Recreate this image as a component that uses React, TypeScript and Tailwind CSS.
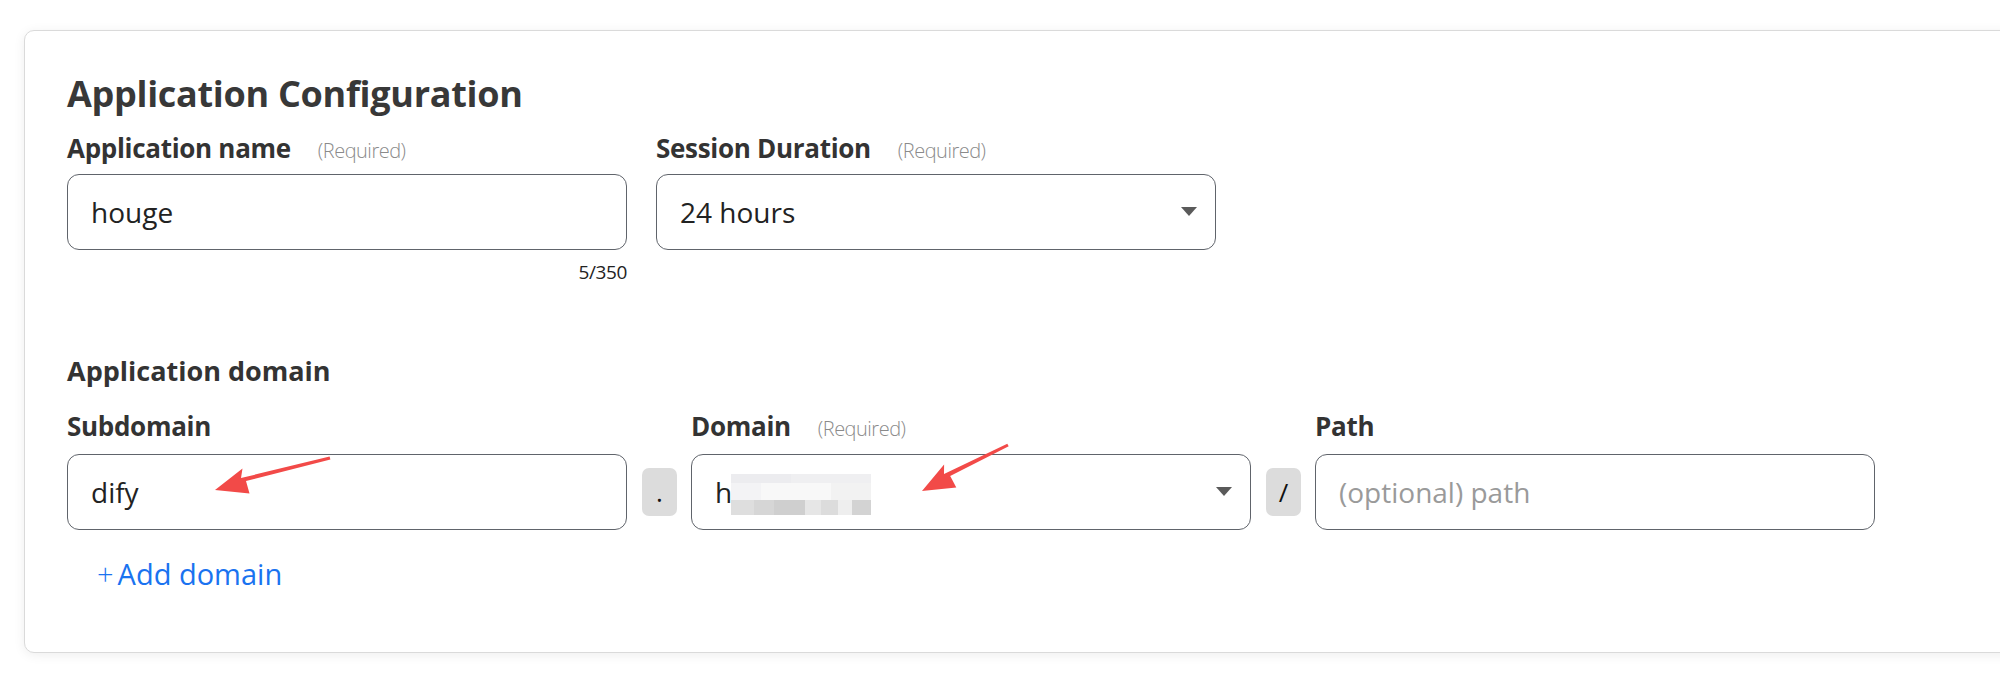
import React from "react";

const FONT = "font-['Open_Sans','Noto_Sans',sans-serif]";

function Caret() {
  return (
    <svg width="16" height="10" viewBox="0 0 16 10" className="shrink-0">
      <polygon points="0,0 16,0 8,9" fill="#5a5a5a" />
    </svg>
  );
}

function Label({ text, required, big }: { text: string; required?: boolean; big?: boolean }) {
  return (
    <div className="flex items-baseline h-[32px] leading-[32px]">
      <span className={`${big ? "text-[27px] tracking-[0px]" : "text-[26px] tracking-[-0.3px]"} font-bold text-[#333333]`}>{text}</span>
      {required && (
        <span className="ml-[27px] text-[20px] font-light text-[#8a8a8a] tracking-[-0.5px]">(Required)</span>
      )}
    </div>
  );
}

function Box({ children }: { children?: React.ReactNode }) {
  return (
    <div className="w-[560px] h-[76px] rounded-[12px] border border-[#60646b] bg-white flex items-center pl-[23px] pr-[18px] text-[28px] text-[#222222]">
      {children}
    </div>
  );
}

function Sep({ ch }: { ch: string }) {
  return (
    <div className="w-[35px] h-[48px] rounded-[7px] bg-[#dcdcdc] flex items-center justify-center text-[26px] text-[#111] ml-[15px] mr-[14px]">
      {ch}
    </div>
  );
}

function Mosaic() {
  const bottom = ["#dedede", "#d6d6d6", "#cfcfcf", "#e6e6e6", "#dcdcdc", "#eeeeee", "#d3d3d3"];
  const widths = [23, 20, 31, 16, 17, 14, 19];
  return (
    <div className="flex flex-col w-[140px] h-[41px] mt-[5px]">
      <div className="h-[9px] flex">
        <div className="w-[60px] bg-[#ececef]" />
        <div className="w-[80px] bg-[#efeff1]" />
      </div>
      <div className="h-[17px] flex">
        <div className="w-[30px] bg-[#f3f3f5]" />
        <div className="w-[70px] bg-[#f8f8f8]" />
        <div className="w-[40px] bg-[#f2f2f2]" />
      </div>
      <div className="h-[15px] flex">
        {bottom.map((c, i) => (
          <div key={i} style={{ width: widths[i], background: c }} />
        ))}
      </div>
    </div>
  );
}

export default function App() {
  return (
    <div className={`relative w-[2000px] h-[676px] bg-white overflow-hidden ${FONT}`}>
      <div className="pt-[30px] pl-[24px]">
        <div className="w-[2100px] rounded-[10px] border border-[#dadada] bg-white shadow-[0_2px_12px_rgba(0,0,0,0.07)] pl-[42px] pt-[43px] pb-[60px]">
          <div className="h-[40px] leading-[40px] text-[36px] font-bold text-[#383838] tracking-[-0.3px]">
            Application Configuration
          </div>

          <div className="flex gap-[29px] mt-[18px]">
            <div className="flex flex-col">
              <Label text="Application name" required />
              <div className="mt-[10px]">
                <Box>houge</Box>
              </div>
              <div className="h-[20px] leading-[20px] mt-[12px] text-right text-[19px] text-[#222] tracking-[-0.4px]">5/350</div>
            </div>
            <div className="flex flex-col">
              <Label text="Session Duration" required />
              <div className="mt-[10px]">
                <Box>
                  <span className="flex-1">24 hours</span>
                  <Caret />
                </Box>
              </div>
            </div>
          </div>

          <div className="mt-[73px]">
            <Label text="Application domain" big />
          </div>

          <div className="flex mt-[23px]">
            <div className="flex flex-col">
              <Label text="Subdomain" />
              <div className="flex items-center mt-[12px]">
                <Box>dify</Box>
                <Sep ch="." />
              </div>
            </div>
            <div className="flex flex-col">
              <Label text="Domain" required />
              <div className="flex items-center mt-[12px]">
                <Box>
                  <div className="flex-1 flex items-center">
                    <span>ho</span>
                    <div className="ml-[-18px]">
                      <Mosaic />
                    </div>
                  </div>
                  <Caret />
                </Box>
                <Sep ch="/" />
              </div>
            </div>
            <div className="flex flex-col">
              <Label text="Path" />
              <div className="mt-[12px]">
                <Box>
                  <span className="text-[#9a9a9a]">(optional) path</span>
                </Box>
              </div>
            </div>
          </div>

          <div className="mt-[26px] ml-[30px] h-[36px] leading-[36px] flex items-center text-[29px] text-[#1a73f0]">
            <span className="font-light mr-[4px]">+</span>
            <span>Add domain</span>
          </div>
        </div>
      </div>

      <svg className="absolute inset-0 pointer-events-none" width="2000" height="676">
        <polygon
          fill="#f24a48"
          points="215,490 249.5,493.6 246,481 330.4,459.4 329.6,456.6 241,478 242.5,468.4"
        />
        <polygon
          fill="#f24a48"
          points="922,491 956.3,487.4 950.2,475.9 1008.7,446.3 1007.3,443.7 944,474 944.1,464.4"
        />
      </svg>
    </div>
  );
}
